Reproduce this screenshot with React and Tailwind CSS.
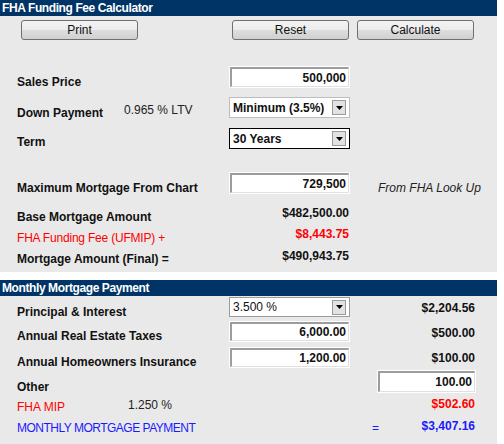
import React from "react";

const LBL = "text-[12px] leading-[14px] font-bold text-[#111]";
const REG = "text-[12px] leading-[14px] text-[#222]";

function Header({ children }) {
  return (
    <div className="h-[16px] bg-[#003366] text-white font-bold text-[12px] leading-[16px] pl-[2px] tracking-[-0.4px]">
      {children}
    </div>
  );
}

function Btn({ children, className = "" }) {
  return (
    <button
      className={`w-[117px] h-[20px] border border-[#707070] rounded-[3px] bg-[linear-gradient(#f3f3f3,#ececec_50%,#dedede_50%,#d0d0d0)] text-[12px] leading-[18px] text-[#111] text-center ${className}`}
    >
      {children}
    </button>
  );
}

function Input({ value, w = "w-[121px]", h = "h-[22px]" }) {
  return (
    <div className={`${w} ${h} bg-white p-px shrink-0`}>
      <div className="h-full bg-white border-t-2 border-l-2 border-b border-r border-t-[#9c9c9c] border-l-[#9c9c9c] border-b-[#e0e0e0] border-r-[#e0e0e0] flex items-center justify-end pr-[2px] text-[12px] leading-[14px] font-bold text-[#111]">
        {value}
      </div>
    </div>
  );
}

function Arrow() {
  return (
    <div className="w-[14px] h-[15px] bg-[#e2e2e2] border border-[#9a9a9a] flex items-center justify-center shrink-0">
      <svg width="7" height="4" viewBox="0 0 7 4">
        <path d="M0 0 H7 L3.5 4 Z" fill="#000" />
      </svg>
    </div>
  );
}

function Select({ children, border = "border-[#bdbdbd]", h = "h-[21px]", bold = true }) {
  return (
    <div className={`w-[121px] ${h} bg-white border ${border} flex items-center justify-between pl-[3px] pr-[3px] shrink-0`}>
      <span className={`text-[12px] leading-[14px] text-[#111] ${bold ? "font-bold" : ""}`}>{children}</span>
      <Arrow />
    </div>
  );
}

export default function App() {
  return (
    <div className="w-[504px] h-[444px] bg-white font-['Liberation_Sans',Arial,sans-serif] overflow-hidden">
      <div className="w-[497px]">
        {/* Section 1 */}
        <div className="bg-[#e9e9e9] pb-[3px]">
          <Header>FHA Funding Fee Calculator</Header>
          <div className="flex mt-[4px] h-[20px]">
            <Btn className="ml-[21px]">Print</Btn>
            <Btn className="ml-[94px]">Reset</Btn>
            <Btn className="ml-[8px]">Calculate</Btn>
          </div>

          <div className="flex mt-[26px] h-[22px]">
            <div className={`w-[229px] pl-[17px] pt-[9px] ${LBL}`}>Sales Price</div>
            <Input value="500,000" />
          </div>

          <div className="flex mt-[9px] h-[21px]">
            <div className="w-[229px] pl-[17px] flex">
              <span className={`w-[107px] pt-[9px] ${LBL}`}>Down Payment</span>
              <span className={`pt-[6px] ${REG}`}>0.965 % LTV</span>
            </div>
            <Select>Minimum (3.5%)</Select>
          </div>

          <div className="flex mt-[10px] h-[21px]">
            <div className={`w-[229px] pl-[17px] pt-[7px] ${LBL}`}>Term</div>
            <Select border="border-black">30 Years</Select>
          </div>

          <div className="flex mt-[23px] h-[22px]">
            <div className={`w-[229px] pl-[17px] pt-[9px] ${LBL}`}>Maximum Mortgage From Chart</div>
            <Input value="729,500" />
            <div className={`ml-[28px] pt-[9px] italic ${REG}`}>From FHA Look Up</div>
          </div>

          <div className="flex mt-[12px] h-[21px]">
            <div className={`w-[229px] pl-[17px] pt-[4px] ${LBL}`}>Base Mortgage Amount</div>
            <div className={`w-[121px] text-right pr-[1px] ${LBL}`}>$482,500.00</div>
          </div>
          <div className="flex h-[21px]">
            <div className="w-[229px] pl-[17px] pt-[4px] text-[12px] leading-[14px] text-[#ff0000] tracking-[-0.2px]">
              FHA Funding Fee (UFMIP) +
            </div>
            <div className="w-[121px] text-right pr-[1px] text-[12px] leading-[14px] font-bold text-[#ff0000]">$8,443.75</div>
          </div>
          <div className="flex h-[21px]">
            <div className={`w-[229px] pl-[17px] pt-[4px] ${LBL}`}>Mortgage Amount (Final) =</div>
            <div className={`w-[121px] text-right pr-[1px] pt-[1px] ${LBL}`}>$490,943.75</div>
          </div>
        </div>

        {/* Section 2 */}
        <div className="mt-[8px] bg-[#e9e9e9] h-[164px]">
          <Header>Monthly Mortgage Payment</Header>

          <div className="flex mt-[1px] h-[20px]">
            <div className={`w-[229px] pl-[17px] pt-[8px] ${LBL}`}>Principal &amp; Interest</div>
            <Select h="h-[20px]" border="border-[#9c9c9c]" bold={false}>3.500 %</Select>
            <div className={`w-[126px] text-right pr-[1px] pt-[4px] ${LBL}`}>$2,204.56</div>
          </div>

          <div className="flex mt-[4px] h-[21px]">
            <div className={`w-[229px] pl-[17px] pt-[8px] ${LBL}`}>Annual Real Estate Taxes</div>
            <Input value="6,000.00" h="h-[21px]" />
            <div className={`w-[126px] text-right pr-[1px] pt-[5px] ${LBL}`}>$500.00</div>
          </div>

          <div className="flex mt-[5px] h-[21px]">
            <div className={`w-[229px] pl-[17px] pt-[8px] ${LBL}`}>Annual Homeowners Insurance</div>
            <Input value="1,200.00" h="h-[21px]" />
            <div className={`w-[126px] text-right pr-[1px] pt-[4px] ${LBL}`}>$100.00</div>
          </div>

          <div className="flex mt-[2px] h-[23px]">
            <div className={`w-[229px] pl-[17px] pt-[10px] ${LBL}`}>Other</div>
            <div className="w-[121px]" />
            <div className="w-[126px] flex justify-end">
              <Input value="100.00" w="w-[99px]" h="h-[23px]" />
            </div>
          </div>

          <div className="flex h-[21px]">
            <div className="w-[229px] pl-[17px] flex">
              <span className="w-[111px] pt-[7px] text-[12px] leading-[14px] text-[#ff0000]">FHA MIP</span>
              <span className={`pt-[5px] ${REG}`}>1.250 %</span>
            </div>
            <div className="w-[121px]" />
            <div className="w-[126px] text-right pr-[1px] pt-[4px] text-[12px] leading-[14px] font-bold text-[#ff0000]">$502.60</div>
          </div>

          <div className="flex h-[21px]">
            <div className="w-[229px] pl-[17px] pt-[7px] text-[12px] leading-[14px] text-[#1a1aff] tracking-[-0.5px] whitespace-nowrap">
              MONTHLY MORTGAGE PAYMENT
            </div>
            <div className="w-[121px]" />
            <div className="w-[126px] flex justify-between pl-[22px] pr-[1px]">
              <span className="pt-[7px] text-[12px] leading-[14px] text-[#1a1aff]">=</span>
              <span className="pt-[5px] text-[12px] leading-[14px] font-bold text-[#1a1aff]">$3,407.16</span>
            </div>
          </div>
        </div>
      </div>
    </div>
  );
}
